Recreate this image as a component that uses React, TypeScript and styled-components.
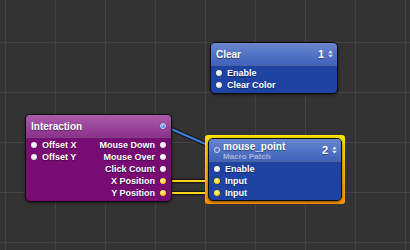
import React from "react";
import styled, { createGlobalStyle } from "styled-components";

type Tone = "blue" | "purple";

const palette: Record<Tone, { top: string; bottom: string; body: string }> = {
  blue: { top: "#6a86cf", bottom: "#3f62bd", body: "#1e43a3" },
  purple: { top: "#aa5cab", bottom: "#8c318d", body: "#780c74" },
};

const Global = createGlobalStyle`
  html, body { margin: 0; padding: 0; background: #333333; }
  body { font-family: "Liberation Sans", Arial, sans-serif; }
`;

const Canvas = styled.div`
  position: relative;
  width: 410px;
  height: 250px;
  overflow: hidden;
  background-color: #333333;
  background-image: linear-gradient(to right, #424242 1px, transparent 1px),
    linear-gradient(to bottom, #424242 1px, transparent 1px);
  background-size: 50px 50px;
  background-position: 5px 42px;
`;

const Wires = styled.svg`
  position: absolute;
  left: 0;
  top: 0;
  width: 410px;
  height: 250px;
`;

const Placed = styled.div<{ $x: number; $y: number }>`
  position: absolute;
  left: ${(p) => p.$x}px;
  top: ${(p) => p.$y}px;
`;

const SelectionFrame = styled.div`
  padding: 3px;
  border-radius: 3px;
  background: linear-gradient(to bottom, #ffe400, #ffb000 60%, #ff9200);
`;

const NodeBox = styled.div<{ $w: number; $tone: Tone; $pb: number }>`
  box-sizing: border-box;
  width: ${(p) => p.$w}px;
  border: 1px solid #0c0c0c;
  border-radius: 5px;
  overflow: hidden;
  background: ${(p) => palette[p.$tone].body};
  box-shadow: 0 1px 3px rgba(0, 0, 0, 0.55);
  padding-bottom: ${(p) => p.$pb}px;
  color: #fff;
  font-weight: bold;
  text-shadow: 0 1px 1px rgba(0, 0, 0, 0.45);
`;

const Header = styled.div<{ $tone: Tone }>`
  height: 22px;
  display: flex;
  align-items: center;
  justify-content: space-between;
  padding: 0 4px 0 5px;
  background: linear-gradient(
    to bottom,
    ${(p) => palette[p.$tone].top},
    ${(p) => palette[p.$tone].bottom}
  );
  border-bottom: 1px solid rgba(0, 0, 0, 0.25);
  margin-bottom: 1px;
`;

const TitleGroup = styled.div`
  display: flex;
  align-items: center;
  gap: 3px;
`;

const TitleStack = styled.div`
  display: flex;
  flex-direction: column;
  padding-top: 1px;
`;

const Title = styled.span`
  font-size: 10px;
  line-height: 11px;
`;

const Subtitle = styled.span`
  font-size: 8px;
  line-height: 9px;
  color: #a9b3d3;
  text-shadow: none;
`;

const Stepper = styled.div`
  display: flex;
  align-items: center;
  gap: 4px;
  font-size: 11px;
`;

const Columns = styled.div`
  display: flex;
  justify-content: space-between;
`;

const PortColumn = styled.div`
  display: flex;
  flex-direction: column;
`;

const PortRow = styled.div<{ $out?: boolean }>`
  height: 12px;
  display: flex;
  align-items: center;
  justify-content: ${(p) => (p.$out ? "flex-end" : "flex-start")};
  gap: 5px;
  padding: ${(p) => (p.$out ? "0 5px 0 0" : "0 0 0 5px")};
  font-size: 9px;
  white-space: nowrap;
`;

type DotKind = "white" | "yellow" | "blue" | "hollow";

const Dot = styled.span<{ $kind: DotKind }>`
  flex: none;
  box-sizing: border-box;
  width: 6px;
  height: 6px;
  border-radius: 50%;
  background: ${(p) =>
    p.$kind === "white"
      ? "radial-gradient(circle at 40% 35%, #ffffff, #e6e6e6 60%, #bdbdbd)"
      : p.$kind === "yellow"
      ? "radial-gradient(circle at 40% 35%, #fff7b0, #ffd21a 60%, #e0a800)"
      : p.$kind === "blue"
      ? "radial-gradient(circle at 40% 35%, #a9c8ff, #4a86e8 60%, #2c5fc0)"
      : "transparent"};
  border: ${(p) =>
    p.$kind === "hollow"
      ? "1px solid #d8def0"
      : p.$kind === "blue"
      ? "1px solid #c9dcff"
      : "none"};
  box-shadow: ${(p) => (p.$kind === "hollow" ? "none" : "0 0 1px rgba(0,0,0,0.6)")};
`;

const Arrows = () => (
  <svg width="5" height="8" viewBox="0 0 5 8">
    <path d="M2.5 0.5 L4.8 3.2 L0.2 3.2 Z" fill="#e8ecf6" />
    <path d="M2.5 7.5 L4.8 4.8 L0.2 4.8 Z" fill="#e8ecf6" />
  </svg>
);

const Port = ({ label, kind = "white", out }: { label: string; kind?: DotKind; out?: boolean }) => (
  <PortRow $out={out}>
    {out ? (
      <>
        <span>{label}</span>
        <Dot $kind={kind} />
      </>
    ) : (
      <>
        <Dot $kind={kind} />
        <span>{label}</span>
      </>
    )}
  </PortRow>
);

export default function App() {
  return (
    <>
      <Global />
      <Canvas>
        <Wires viewBox="0 0 410 250">
          <g strokeLinecap="round">
            <line x1="162" y1="125" x2="217" y2="149" stroke="#141414" strokeWidth="4.5" />
            <line x1="162" y1="125" x2="217" y2="149" stroke="#3d7ee0" strokeWidth="2.2" />
            <line x1="162" y1="181" x2="217" y2="181" stroke="#161616" strokeWidth="4.5" />
            <line x1="162" y1="181" x2="217" y2="181" stroke="#ffd21c" strokeWidth="2.2" />
            <line x1="162" y1="193" x2="217" y2="193" stroke="#161616" strokeWidth="4.5" />
            <line x1="162" y1="193" x2="217" y2="193" stroke="#ffd21c" strokeWidth="2.2" />
          </g>
        </Wires>

        <Placed $x={210} $y={42}>
          <NodeBox $w={128} $tone="blue" $pb={2}>
            <Header $tone="blue">
              <Title>Clear</Title>
              <Stepper>
                <span>1</span>
                <Arrows />
              </Stepper>
            </Header>
            <PortColumn>
              <Port label="Enable" />
              <Port label="Clear Color" />
            </PortColumn>
          </NodeBox>
        </Placed>

        <Placed $x={25} $y={114}>
          <NodeBox $w={147} $tone="purple" $pb={2}>
            <Header $tone="purple">
              <Title>Interaction</Title>
              <Dot $kind="blue" style={{ marginRight: 1 }} />
            </Header>
            <Columns>
              <PortColumn>
                <Port label="Offset X" />
                <Port label="Offset Y" />
              </PortColumn>
              <PortColumn>
                <Port out label="Mouse Down" />
                <Port out label="Mouse Over" />
                <Port out label="Click Count" />
                <Port out label="X Position" kind="yellow" />
                <Port out label="Y Position" kind="yellow" />
              </PortColumn>
            </Columns>
          </NodeBox>
        </Placed>

        <Placed $x={205} $y={135}>
          <SelectionFrame>
            <NodeBox $w={134} $tone="blue" $pb={1}>
              <Header $tone="blue">
                <TitleGroup>
                  <Dot $kind="hollow" />
                  <TitleStack>
                    <Title>mouse_point</Title>
                    <Subtitle>Macro Patch</Subtitle>
                  </TitleStack>
                </TitleGroup>
                <Stepper>
                  <span>2</span>
                  <Arrows />
                </Stepper>
              </Header>
              <PortColumn>
                <Port label="Enable" />
                <Port label="Input" kind="yellow" />
                <Port label="Input" kind="yellow" />
              </PortColumn>
            </NodeBox>
          </SelectionFrame>
        </Placed>
      </Canvas>
    </>
  );
}
